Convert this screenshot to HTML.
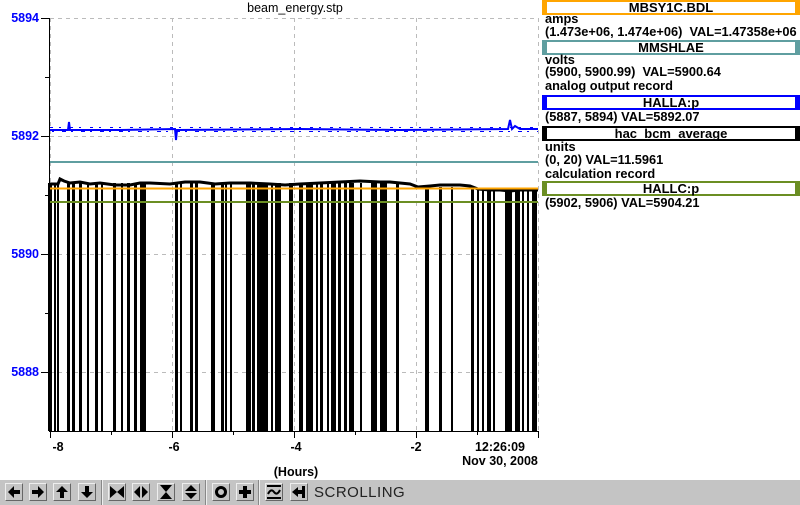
<!DOCTYPE html>
<html><head><style>
body{margin:0;width:800px;height:505px;background:#fff;position:relative;overflow:hidden;font-family:"Liberation Sans",sans-serif;}
.t{position:absolute;font-size:12.8px;font-weight:bold;line-height:12px;white-space:nowrap;color:#000;}
.box{position:absolute;left:542px;width:248px;border-style:solid;border-width:2px 5px;text-align:center;font-size:13px;font-weight:bold;line-height:11px;}
#tb{position:absolute;left:0;top:480px;width:800px;height:25px;background:#c4c4c4;}
.b{position:absolute;top:3px;width:16px;height:16px;background:#c4c4c4;border:1px solid;border-color:#eee #666 #666 #eee;}
.sep{position:absolute;top:0;width:1px;height:25px;background:#888;border-right:1px solid #eee;}
</style></head><body>
<svg width="800" height="480" style="position:absolute;left:0;top:0" font-family="Liberation Sans" font-weight="bold" font-size="12.5">
<g stroke="#bbb" stroke-dasharray="4,4" stroke-width="1">
<line x1="50" y1="18.5" x2="538" y2="18.5"/><line x1="50" y1="136.5" x2="538" y2="136.5"/><line x1="50" y1="254.5" x2="538" y2="254.5"/><line x1="50" y1="372.5" x2="538" y2="372.5"/>
<line x1="50.5" y1="18" x2="50.5" y2="431"/><line x1="172.5" y1="18" x2="172.5" y2="431"/><line x1="294.5" y1="18" x2="294.5" y2="431"/><line x1="416.5" y1="18" x2="416.5" y2="431"/><line x1="538.5" y1="18" x2="538.5" y2="431"/>
</g>
<g stroke="#000" stroke-width="1">
<line x1="49.5" y1="18" x2="49.5" y2="431"/><line x1="49" y1="431.5" x2="539" y2="431.5"/>
<line x1="41" y1="18.5" x2="49" y2="18.5"/><line x1="41" y1="136.5" x2="49" y2="136.5"/><line x1="41" y1="254.5" x2="49" y2="254.5"/><line x1="41" y1="372.5" x2="49" y2="372.5"/>
<line x1="45" y1="77.5" x2="49" y2="77.5"/><line x1="45" y1="195.5" x2="49" y2="195.5"/><line x1="45" y1="313.5" x2="49" y2="313.5"/>
<line x1="50.5" y1="431" x2="50.5" y2="438"/><line x1="172.5" y1="431" x2="172.5" y2="438"/><line x1="294.5" y1="431" x2="294.5" y2="438"/><line x1="416.5" y1="431" x2="416.5" y2="438"/><line x1="538.5" y1="431" x2="538.5" y2="438"/>
<line x1="111.5" y1="431" x2="111.5" y2="435"/><line x1="233.5" y1="431" x2="233.5" y2="435"/><line x1="355.5" y1="431" x2="355.5" y2="435"/><line x1="477.5" y1="431" x2="477.5" y2="435"/>
</g>
<g fill="#00f" text-anchor="end"><text x="39" y="22">5894</text><text x="39" y="140">5892</text><text x="39" y="258">5890</text><text x="39" y="376">5888</text></g>
<g text-anchor="middle"><text x="58" y="451">-8</text><text x="174" y="451">-6</text><text x="296" y="451">-4</text><text x="416" y="451">-2</text><text x="500" y="451">12:26:09</text><text x="500" y="465">Nov 30, 2008</text><text x="296" y="476">(Hours)</text>
<text x="295" y="12" font-weight="normal">beam_energy.stp</text></g>
<line x1="50" y1="162" x2="538" y2="162" stroke="#5f9ea0" stroke-width="2"/>
<polyline fill="none" stroke="#00f" stroke-width="2" points="50,130 68,130 69,122 70,130 120,130 175,129 176,140 177,130 300,129 400,130 508,129 510,120 512,129 515,126 520,129 538,129"/>
<line x1="50" y1="127.5" x2="538" y2="127.5" stroke="#00f" stroke-dasharray="3,6,2,9" stroke-width="1"/>
<line x1="52" y1="131.5" x2="538" y2="131.5" stroke="#00f" stroke-dasharray="2,8,4,5" stroke-width="1"/>
<g fill="#000">
<rect x="48" y="183" width="4" height="248"/><rect x="54" y="183" width="2" height="248"/><rect x="57" y="183" width="2" height="248"/><rect x="67" y="183" width="3" height="248"/><rect x="72" y="183" width="3" height="248"/><rect x="79" y="183" width="3" height="248"/><rect x="87" y="183" width="2" height="248"/><rect x="95" y="183" width="3" height="248"/><rect x="101" y="183" width="2" height="248"/><rect x="113" y="183" width="3" height="248"/><rect x="121" y="183" width="2" height="248"/><rect x="127" y="183" width="3" height="248"/><rect x="134" y="183" width="3" height="248"/><rect x="140" y="183" width="6" height="248"/><rect x="175" y="183" width="3" height="248"/><rect x="180" y="183" width="2" height="248"/><rect x="190" y="183" width="3" height="248"/><rect x="195" y="183" width="3" height="248"/><rect x="211" y="183" width="4" height="248"/><rect x="221" y="183" width="3" height="248"/><rect x="225" y="183" width="2" height="248"/><rect x="230" y="183" width="2" height="248"/><rect x="246" y="183" width="5" height="248"/><rect x="252" y="183" width="3" height="248"/><rect x="257" y="183" width="11" height="248"/><rect x="271" y="183" width="2" height="248"/><rect x="275" y="183" width="6" height="248"/><rect x="289" y="183" width="4" height="248"/><rect x="299" y="183" width="4" height="248"/><rect x="306" y="183" width="7" height="248"/><rect x="316" y="183" width="2" height="248"/><rect x="320" y="183" width="3" height="248"/><rect x="327" y="183" width="2" height="248"/><rect x="331" y="183" width="5" height="248"/><rect x="338" y="183" width="3" height="248"/><rect x="344" y="183" width="3" height="248"/><rect x="349" y="183" width="5" height="248"/><rect x="360" y="183" width="2" height="248"/><rect x="371" y="183" width="4" height="248"/><rect x="375" y="183" width="2" height="248"/><rect x="380" y="183" width="7" height="248"/><rect x="396" y="183" width="3" height="248"/><rect x="425" y="187" width="4" height="244"/><rect x="439" y="187" width="3" height="244"/><rect x="451" y="187" width="2" height="244"/><rect x="471" y="188" width="3" height="243"/><rect x="477" y="188" width="2" height="243"/><rect x="482" y="188" width="2" height="243"/><rect x="487" y="188" width="4" height="243"/><rect x="493" y="188" width="2" height="243"/><rect x="505" y="190" width="7" height="241"/><rect x="515" y="190" width="5" height="241"/><rect x="522" y="190" width="2" height="241"/><rect x="527" y="190" width="2" height="241"/><rect x="532" y="190" width="5" height="241"/>
</g>
<polyline fill="none" stroke="#000" stroke-width="3" points="50,184 58,184 60,179 64,181 70,183 80,182 90,184 100,183 115,185 130,185 140,183 150,183 170,184 185,182 200,182 215,184 230,183 250,183 270,184 285,185 300,184 320,183 340,182 360,181 380,182 390,182 400,183 410,184 418,187 430,186 440,185 460,185 470,186 478,189 490,190 500,190 510,191 520,190 538,190"/>
<line x1="50" y1="188.5" x2="538" y2="188.5" stroke="#ffa500" stroke-width="2"/>
<line x1="50" y1="202" x2="538" y2="202" stroke="#6b8e23" stroke-width="2"/>
</svg>
<div class="box" style="top:0;border-color:#ffa500">MBSY1C.BDL</div>
<div class="t" style="left:545px;top:13px">amps</div>
<div class="t" style="left:545px;top:26px">(1.473e+06, 1.474e+06)&nbsp; VAL=1.47358e+06</div>
<div class="box" style="top:40px;border-color:#5f9ea0">MMSHLAE</div>
<div class="t" style="left:545px;top:54px">volts</div>
<div class="t" style="left:545px;top:66px">(5900, 5900.99)&nbsp; VAL=5900.64</div>
<div class="t" style="left:545px;top:80px">analog output record</div>
<div class="box" style="top:95px;border-color:#00f">HALLA:p</div>
<div class="t" style="left:545px;top:111px">(5887, 5894) VAL=5892.07</div>
<div class="box" style="top:126px;border-color:#000">hac_bcm_average</div>
<div class="t" style="left:545px;top:141px">units</div>
<div class="t" style="left:545px;top:154px">(0, 20) VAL=11.5961</div>
<div class="t" style="left:545px;top:168px">calculation record</div>
<div class="box" style="top:181px;border-color:#6b8e23">HALLC:p</div>
<div class="t" style="left:545px;top:197px">(5902, 5906) VAL=5904.21</div>
<div id="tb">
<div class="b" style="left:5px"><svg width="16" height="16"><path d="M2 8L8 2V6H14V10H8V14Z"/></svg></div>
<div class="b" style="left:29px"><svg width="16" height="16"><path d="M14 8L8 2V6H2V10H8V14Z"/></svg></div>
<div class="b" style="left:53px"><svg width="16" height="16"><path d="M8 2L2 8H6V14H10V8H14Z"/></svg></div>
<div class="b" style="left:78px"><svg width="16" height="16"><path d="M8 14L2 8H6V2H10V8H14Z"/></svg></div>
<div class="sep" style="left:101px"></div>
<div class="b" style="left:108px"><svg width="16" height="16"><path d="M1 2L8 8L1 14ZM15 2L8 8L15 14Z"/></svg></div>
<div class="b" style="left:132px"><svg width="16" height="16"><path d="M7 2L1 8L7 14ZM9 2L15 8L9 14Z"/></svg></div>
<div class="b" style="left:157px"><svg width="16" height="16"><path d="M2 1L8 8L14 1ZM2 15L8 8L14 15Z"/></svg></div>
<div class="b" style="left:182px"><svg width="16" height="16"><path d="M2 7L8 1L14 7ZM2 9L8 15L14 9Z"/></svg></div>
<div class="sep" style="left:205px"></div>
<div class="b" style="left:212px"><svg width="16" height="16"><circle cx="8" cy="8" r="4.5" fill="none" stroke="#000" stroke-width="3"/></svg></div>
<div class="b" style="left:236px"><svg width="16" height="16"><path d="M6 2H10V6H14V10H10V14H6V10H2V6H6Z"/></svg></div>
<div class="sep" style="left:258px"></div>
<div class="b" style="left:265px"><svg width="16" height="16"><rect x="1" y="1" width="14" height="2"/><rect x="1" y="13" width="14" height="2"/><path d="M2 10Q5 4 8 8T14 6" fill="none" stroke="#000" stroke-width="2"/></svg></div>
<div class="b" style="left:290px"><svg width="16" height="16"><path d="M1 8L7 3V13Z"/><rect x="7" y="6" width="4" height="4"/><rect x="11" y="2" width="3" height="12"/></svg></div>
<div style="position:absolute;left:314px;top:4px;font-size:15px;color:#222;letter-spacing:0.5px">SCROLLING</div>
</div>
</body></html>
